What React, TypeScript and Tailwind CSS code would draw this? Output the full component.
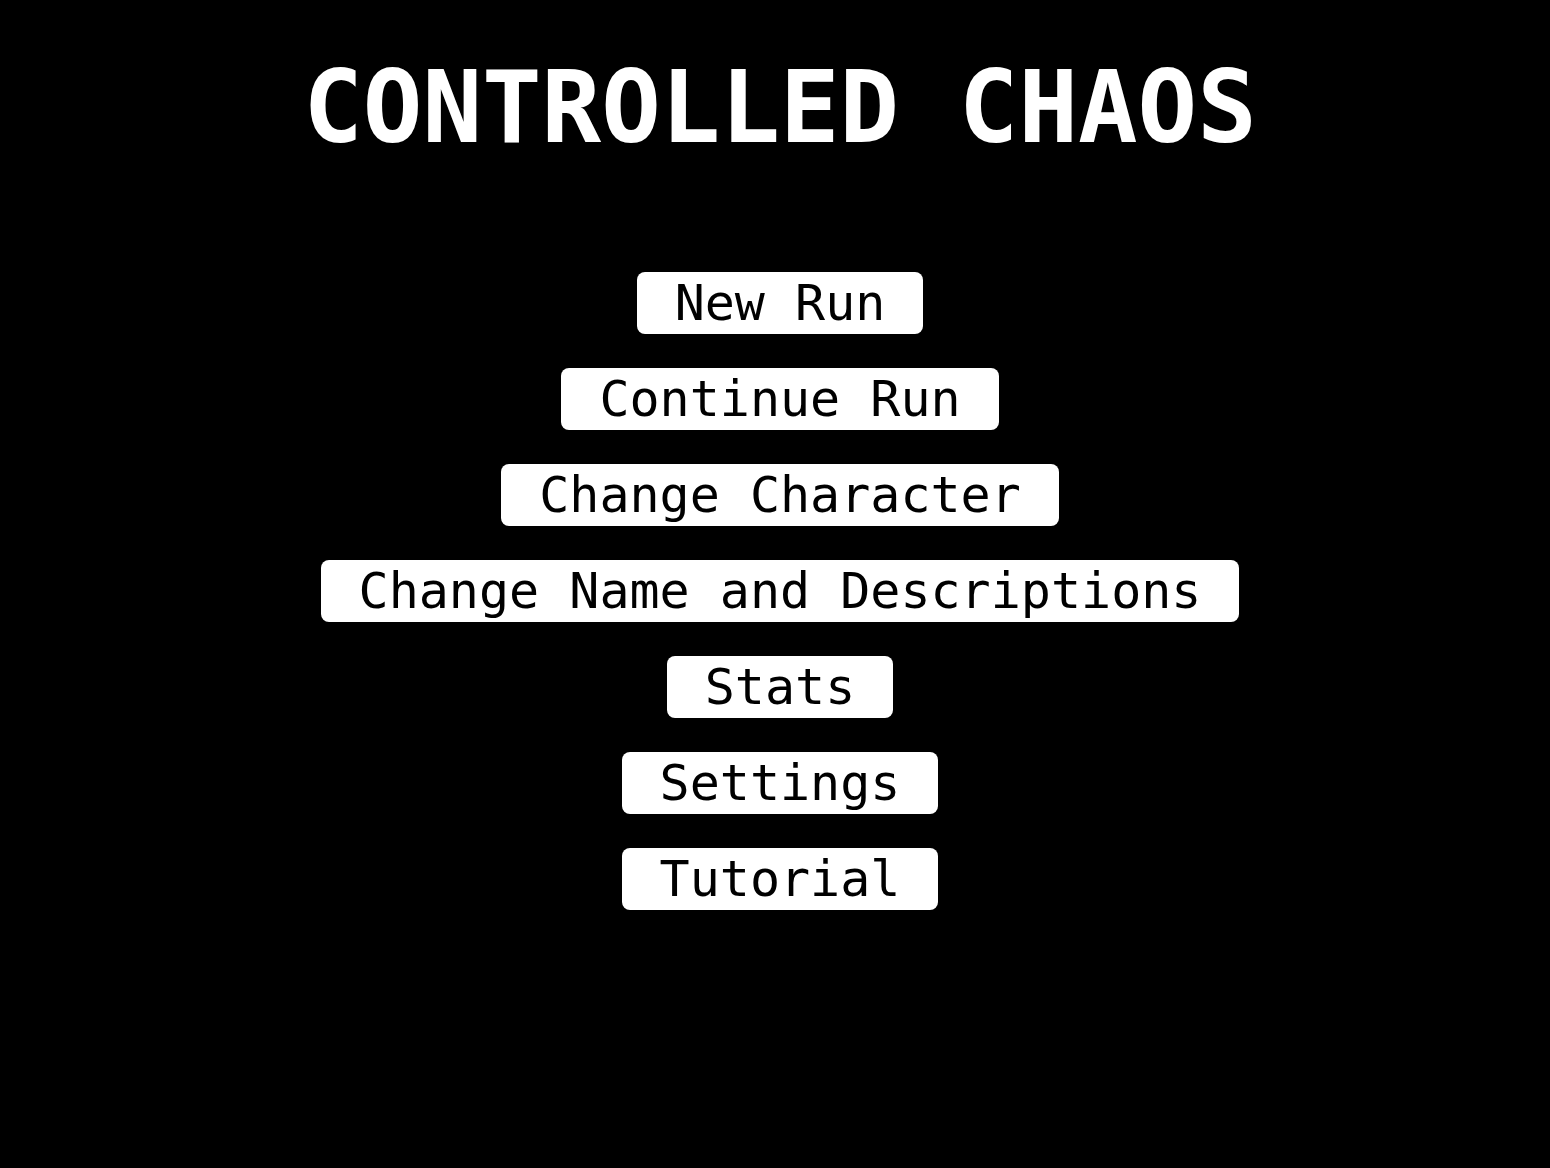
const items = [
  "New Run",
  "Continue Run",
  "Change Character",
  "Change Name and Descriptions",
  "Stats",
  "Settings",
  "Tutorial",
];

export default function App() {
  return (
    <div
      className="flex min-h-screen w-full flex-col items-center bg-black pl-[10px] text-white"
      style={{ fontFamily: '"DejaVu Sans Mono", monospace' }}
    >
      <h1 className="mt-[50px] text-[99px] font-bold leading-[116px] tracking-normal">
        CONTROLLED CHAOS
      </h1>
      <div className="mt-[106px] flex flex-col items-center gap-[34px]">
        {items.map((label) => (
          <button
            key={label}
            className="h-[62px] whitespace-pre rounded-lg bg-white px-[38px] text-[50px] leading-[62px] text-black"
          >
            {label}
          </button>
        ))}
      </div>
    </div>
  );
}
